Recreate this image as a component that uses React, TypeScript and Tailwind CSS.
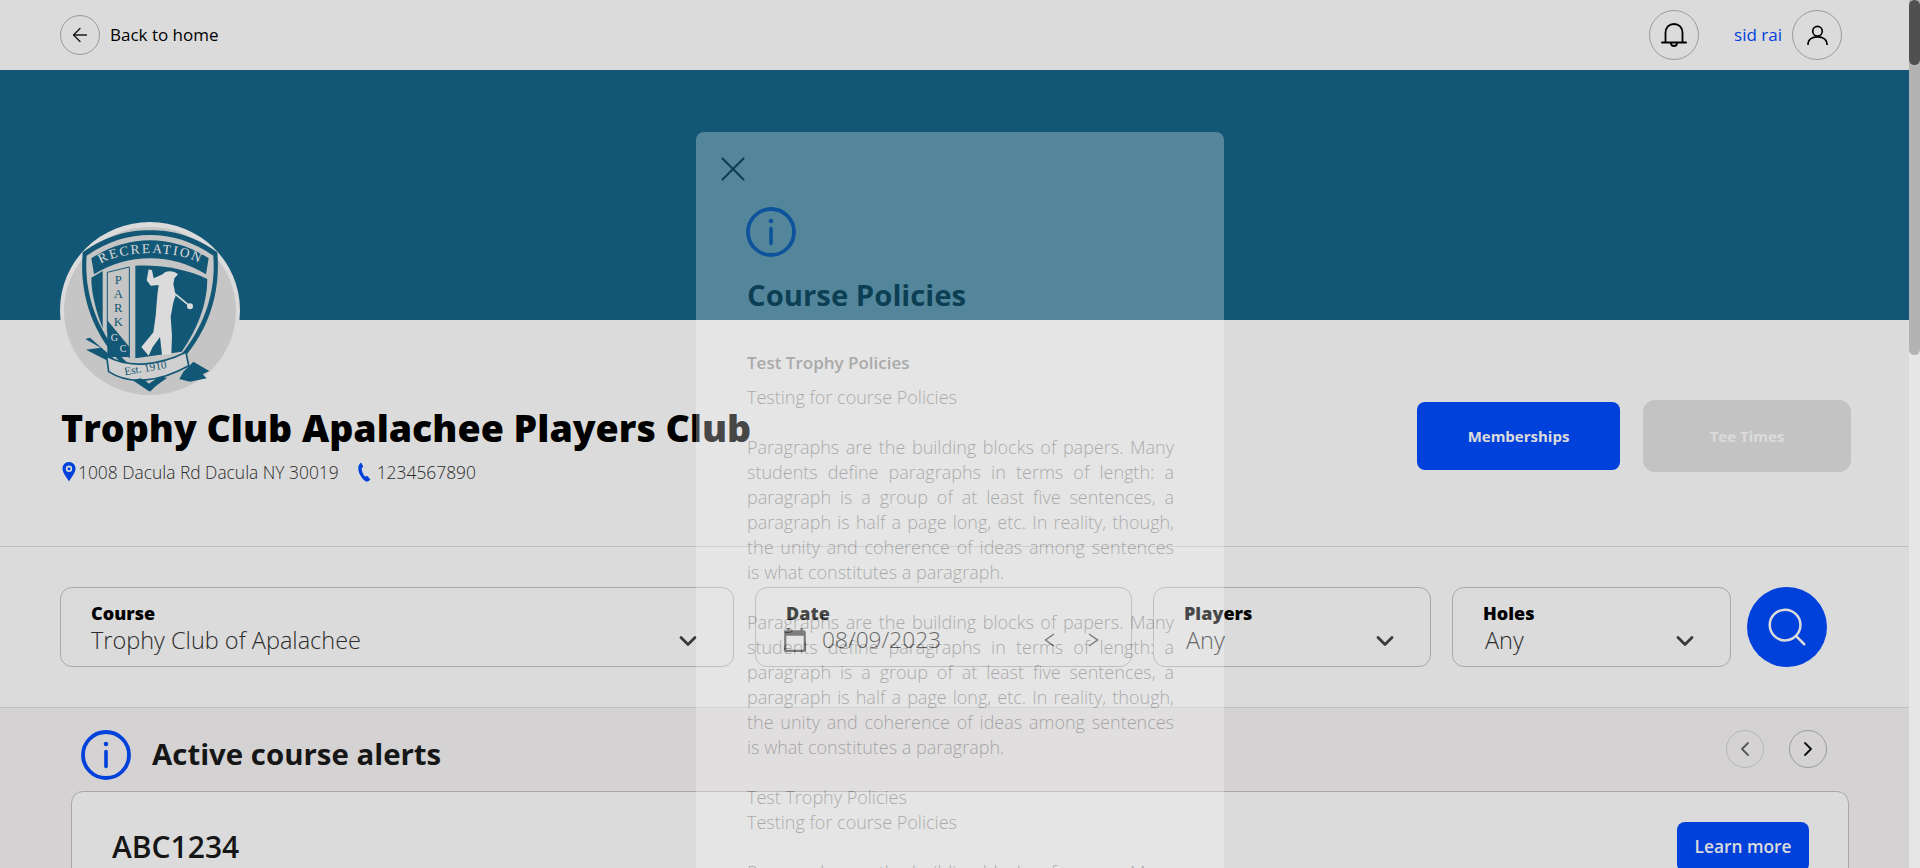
import React from 'react';
import { ArrowLeft, ChevronDown, ChevronLeft, ChevronRight, Search, X } from 'lucide-react';

const Crest = () => (
  <svg viewBox="30 21 540 528" className="w-full h-full">
    <ellipse cx="300" cy="285" rx="270" ry="264" fill="#ffffff" />
    <ellipse cx="300" cy="288" rx="258" ry="252" fill="#e6e6e6" />
    {/* shield */}
    <path d="M98 112 C170 62 230 46 300 46 C370 46 430 62 502 112 C512 230 478 340 400 430 L300 530 L200 430 C122 340 88 230 98 112 Z" fill="#156689" />
    <path d="M110 122 C175 78 235 60 300 60 C365 60 425 78 490 122 C498 230 464 330 394 418 L300 510 L206 418 C136 330 102 230 110 122 Z" fill="#e6e6e6" />
    <path d="M124 130 C180 94 240 76 300 76 C360 76 420 94 476 130 L468 178 C415 146 360 130 300 130 C240 130 185 146 132 178 Z" fill="#156689" />
    <path d="M124 188 L158 168 L158 340 C140 292 124 240 124 188 Z" fill="#156689" />
    <path d="M256 152 C320 148 410 160 472 192 C472 270 440 345 395 410 L256 430 Z" fill="#156689" />
    {/* PARK column */}
    <path d="M172 172 L238 156 L238 428 L172 350 Z" fill="#e6e6e6" stroke="#156689" strokeWidth="3" />
    <path d="M172 316 L238 396 L238 426 L172 426 Z" fill="#156689" />
    <g fill="#156689" fontFamily="'Liberation Serif', serif" fontSize="38" textAnchor="middle">
      <text x="205" y="206">P</text>
      <text x="205" y="248">A</text>
      <text x="205" y="290">R</text>
      <text x="205" y="332">K</text>
    </g>
    <g fill="#ffffff" fontFamily="'Liberation Serif', serif" fontSize="30" textAnchor="middle">
      <text x="193" y="378">G</text>
      <text x="219" y="410">C</text>
    </g>
    {/* arc title */}
    <path id="crest-arc" d="M152 146 C220 104 380 104 452 146" fill="none" />
    <text fill="#ffffff" fontFamily="'Liberation Serif', serif" fontSize="40">
      <textPath href="#crest-arc" startOffset="0" textLength="304" lengthAdjust="spacing">RECREATION</textPath>
    </text>
    {/* golfer */}
    <path d="M296 163 L306 166 L311 190 L338 178 C345 166 372 165 384 178 L373 190 C373 200 368 206 372 216 L377 242 L370 262 L362 306 L366 362 L364 418 L336 420 L330 366 L308 396 L296 422 L274 396 L310 352 L317 302 L322 240 L326 210 L302 212 L290 196 Z" fill="#ffffff" />
    <path d="M374 236 L418 272" stroke="#ffffff" strokeWidth="5" />
    <circle cx="420" cy="274" r="9" fill="#ffffff" />
    {/* ribbon */}
    <path d="M120 368 L106 372 L152 398 L108 404 L170 436 L198 470 L240 490 L214 450 L168 410 Z" fill="#156689" />
    <path d="M400 470 L430 440 L478 468 L458 478 L470 490 L420 500 L388 492 Z" fill="#156689" />
    <path d="M170 424 C240 462 330 450 408 412 L416 452 C330 500 240 512 176 470 Z" fill="#f2f2f2" stroke="#156689" strokeWidth="5" />
    <text x="288" y="470" fill="#156689" fontFamily="'Liberation Serif', serif" fontSize="34" textAnchor="middle" transform="rotate(-10 288 470)">Est. 1910</text>
    <path d="M248 496 L296 528 L352 488 L328 486 L296 506 L272 490 Z" fill="#156689" />
  </svg>
);

const InfoIcon = () => (
  <svg viewBox="0 0 50 50" className="w-[50px] h-[50px] shrink-0" fill="none" stroke="#004bff">
    <circle cx="25" cy="25" r="23" strokeWidth="3.8" />
    <circle cx="25" cy="14" r="2.3" fill="#004bff" stroke="none" />
    <path d="M25 21.5 V36.5" strokeWidth="3.6" strokeLinecap="round" />
  </svg>
);

const BellIcon = () => (
  <svg viewBox="0 0 26 26" className="w-[26px] h-[26px]" fill="none" stroke="#000" strokeWidth="1.8">
    <path d="M4.5 20 V11 C4.5 5.5 8 2 13 2 C18 2 21.5 5.5 21.5 11 V20" />
    <path d="M1 20.5 H25" strokeWidth="2" strokeLinecap="round" />
    <path d="M10 21 C10 25 16 25 16 21" />
  </svg>
);

const UserIcon = () => (
  <svg viewBox="0 0 22 22" className="w-[21px] h-[21px]" fill="none" stroke="#000" strokeWidth="1.7">
    <circle cx="11" cy="6.5" r="5" />
    <path d="M1 21 C1 15 5 12.5 11 12.5 C17 12.5 21 15 21 21" />
  </svg>
);

const PinIcon = () => (
  <svg viewBox="0 0 14 20" className="w-[14px] h-[20px]">
    <path fillRule="evenodd" d="M7 0 C3 0 0.5 3 0.5 6.6 C0.5 11 5 16 7 19.5 C9 16 13.5 11 13.5 6.6 C13.5 3 11 0 7 0 Z M7 3.6 A3.2 3.2 0 1 1 7 10 A3.2 3.2 0 1 1 7 3.6 Z" fill="#004bff" />
    <circle cx="7" cy="6.8" r="1.5" fill="#004bff" />
  </svg>
);

const PhoneIcon = () => (
  <svg viewBox="0 0 14 20" className="w-[14px] h-[20px]">
    <path d="M4 0.5 L6.2 4.6 L4.6 6.4 C4.8 9.5 6.4 13 8.2 14.6 L10.4 14 L13.4 17.6 L11 19.6 C7 19.8 2.8 14 1.4 8.2 C1 5 1.6 2 4 0.5 Z" fill="#004bff" />
  </svg>
);

const CalendarIcon = () => (
  <svg viewBox="0 0 24 24" className="w-[26px] h-[26px]" fill="#555">
    <path d="M20 3h-1V1h-2v2H7V1H5v2H4c-1.1 0-2 .9-2 2v16c0 1.1.9 2 2 2h16c1.1 0 2-.9 2-2V5c0-1.1-.9-2-2-2zm0 18H4V8h16v13z" />
  </svg>
);

const SelectBox = ({ label, value, width, valuePad }: { label: string; value: string; width: string; valuePad: string }) => (
  <div className={`${width} h-20 shrink-0 border border-[#c4c4c4] rounded-xl flex flex-col pt-[15px] pl-[30px] relative`}>
    <span className="text-lg font-extrabold text-black leading-[21px]">{label}</span>
    <span className={`text-[23.5px] font-light text-[#333] leading-8 ${valuePad}`}>{value}</span>
    <ChevronDown className="absolute right-[31px] top-[39px] w-7 h-7 text-[#444]" strokeWidth={2.4} />
  </div>
);

const Paragraph = () => (
  <p className="text-justify font-light">
    Paragraphs are the building blocks of papers. Many students define paragraphs in terms of length: a paragraph is a
    group of at least five sentences, a paragraph is half a page long, etc. In reality, though, the unity and coherence of
    ideas among sentences is what constitutes a paragraph.
  </p>
);

export default function App() {
  return (
    <div className="relative h-[868px] w-[1920px] overflow-hidden bg-white font-['Open_Sans',sans-serif]">
      <div className="w-[1909px]">
        {/* top bar */}
        <header className="h-[70px] flex items-center pl-[60px] pr-[67px]">
          <button className="w-10 h-10 rounded-full border border-[#b5b5b5] flex items-center justify-center">
            <ArrowLeft className="w-[22px] h-[22px] text-[#222]" strokeWidth={1.6} />
          </button>
          <span className="ml-[10px] text-[17px] text-black">Back to home</span>
          <div className="ml-auto flex items-center">
            <button className="w-[50px] h-[50px] rounded-full border border-[#b5b5b5] flex items-center justify-center">
              <BellIcon />
            </button>
            <span className="ml-[35px] text-[17px] text-[#004bff]">sid rai</span>
            <button className="ml-[10px] w-[50px] h-[50px] rounded-full border border-[#b5b5b5] flex items-center justify-center">
              <UserIcon />
            </button>
          </div>
        </header>

        {/* banner */}
        <div className="h-[250px] bg-[#156689]" />

        {/* club info */}
        <section className="h-[227px] border-b border-[#dfdfdf] pl-[60px] pr-[58px] flex items-start justify-between">
          <div>
            <div className="relative -mt-[98px] w-[180px] h-[176px]">
              <Crest />
            </div>
            <h1 className="mt-[4px] ml-[1px] text-[37.5px] leading-[52px] font-extrabold text-black whitespace-nowrap">Trophy Club Apalachee Players Club</h1>
            <div className="mt-[5px] ml-[2px] flex items-center text-[17.4px] font-light text-[#333]">
              <PinIcon />
              <span className="ml-[2px]">1008 Dacula Rd Dacula NY 30019</span>
              <span className="ml-[18px]"><PhoneIcon /></span>
              <span className="ml-[6px]">1234567890</span>
            </div>
          </div>
          <div className="mt-[80px] flex items-center gap-[23px]">
            <button className="w-[203px] h-[68px] rounded-lg bg-[#004bff] text-white text-[15px] font-bold">Memberships</button>
            <button className="w-[208px] h-[72px] rounded-xl bg-[#e4e4e4] text-white text-[15px] font-bold">Tee Times</button>
          </div>
        </section>

        {/* search filters */}
        <section className="h-[160px] pl-[60px] pt-[40px] flex items-start gap-[21px]">
          <SelectBox label="Course" value="Trophy Club of Apalachee" width="w-[674px]" valuePad="pl-0" />
          <div className="w-[377px] h-20 shrink-0 border border-[#c4c4c4] rounded-xl flex flex-col pt-[15px] pl-[30px]">
            <span className="text-lg font-extrabold text-black leading-[21px]">Date</span>
            <div className="flex items-center h-8 -ml-[4px]">
              <CalendarIcon />
              <span className="pl-[14px] text-[22.7px] font-light text-[#333]">08/09/2023</span>
              <svg viewBox="0 0 11 14" className="ml-[103px] w-[11px] h-[14px]" fill="none" stroke="#555" strokeWidth="1.5">
                <path d="M10 1 L1.5 7 L10 13" />
              </svg>
              <svg viewBox="0 0 11 14" className="ml-[33px] w-[11px] h-[14px]" fill="none" stroke="#555" strokeWidth="1.5">
                <path d="M1 1 L9.5 7 L1 13" />
              </svg>
            </div>
          </div>
          <SelectBox label="Players" value="Any" width="w-[278px]" valuePad="pl-[2px]" />
          <SelectBox label="Holes" value="Any" width="w-[279px]" valuePad="pl-[2px]" />
          <button className="-ml-[5px] w-20 h-20 shrink-0 rounded-full bg-[#004bff] flex items-center justify-center">
            <Search className="w-[46px] h-[46px] text-white" strokeWidth={1.3} />
          </button>
        </section>

        {/* alerts */}
        <section className="h-[161px] bg-[#f7f5f6] border-t border-[#dfdfdf] pl-[71px] pr-[60px] overflow-hidden">
          <div className="flex items-start h-[83px] pt-[22px] pl-[10px] pr-[22px]">
            <InfoIcon />
            <h2 className="ml-[21px] text-[29.4px] leading-[48px] font-bold text-[#1a1a1a]">Active course alerts</h2>
            <div className="ml-auto flex items-center gap-[25px]">
              <button className="w-[38px] h-[38px] rounded-full border border-[#d5d5d5] flex items-center justify-center">
                <ChevronLeft className="w-6 h-6 text-[#666]" strokeWidth={1.8} />
              </button>
              <button className="w-[38px] h-[38px] rounded-full border border-[#b5b5b5] flex items-center justify-center">
                <ChevronRight className="w-6 h-6 text-[#111]" strokeWidth={1.8} />
              </button>
            </div>
          </div>
          <div className="h-[120px] bg-white border border-[#c4c4c4] rounded-xl pl-[40px] pr-[39px] pt-[30px] flex items-start justify-between">
            <h3 className="text-[30px] leading-[50px] font-semibold text-[#1a1a1a]">ABC1234</h3>
            <button className="w-[132px] h-[50px] rounded-lg bg-[#004bff] text-white text-[17.3px] font-semibold">Learn more</button>
          </div>
        </section>
      </div>

      {/* dialog backdrop */}
      <div className="absolute inset-0 bg-black/[.14] flex justify-center overflow-hidden">
        <div className="mt-[132px] w-[528px] h-[1200px] shrink-0 rounded-lg bg-white opacity-[.28] text-lg leading-[25px] text-[#2a2a2a]">
          <button className="block ml-[16px] pt-[16px]">
            <X className="w-[42px] h-[42px] text-black" strokeWidth={1.25} />
          </button>
          <div className="pl-[51px] pr-[50px]">
            <div className="mt-[17px] -ml-[1px]"><InfoIcon /></div>
            <h2 className="mt-[18px] text-[29.3px] leading-10 font-bold text-black">Course Policies</h2>
            <p className="mt-[35px] text-[17px] font-semibold">Test Trophy Policies</p>
            <p className="mt-[10px] font-light">Testing for course Policies</p>
            <div className="mt-[25px]"><Paragraph /></div>
            <div className="mt-[25px]"><Paragraph /></div>
            <p className="mt-[25px] font-light">Test Trophy Policies</p>
            <p className="font-light">Testing for course Policies</p>
            <div className="mt-[25px]"><Paragraph /></div>
          </div>
        </div>
      </div>

      {/* window scrollbars */}
      <div className="absolute right-0 top-0 w-[11px] h-full bg-[#e6e6e6]">
        <div className="absolute inset-x-0 top-0 h-[355px] rounded-b-md bg-[#b3b3b3]" />
        <div className="absolute inset-x-0 top-0 h-[65px] rounded-md bg-[#505050]" />
      </div>
    </div>
  );
}
